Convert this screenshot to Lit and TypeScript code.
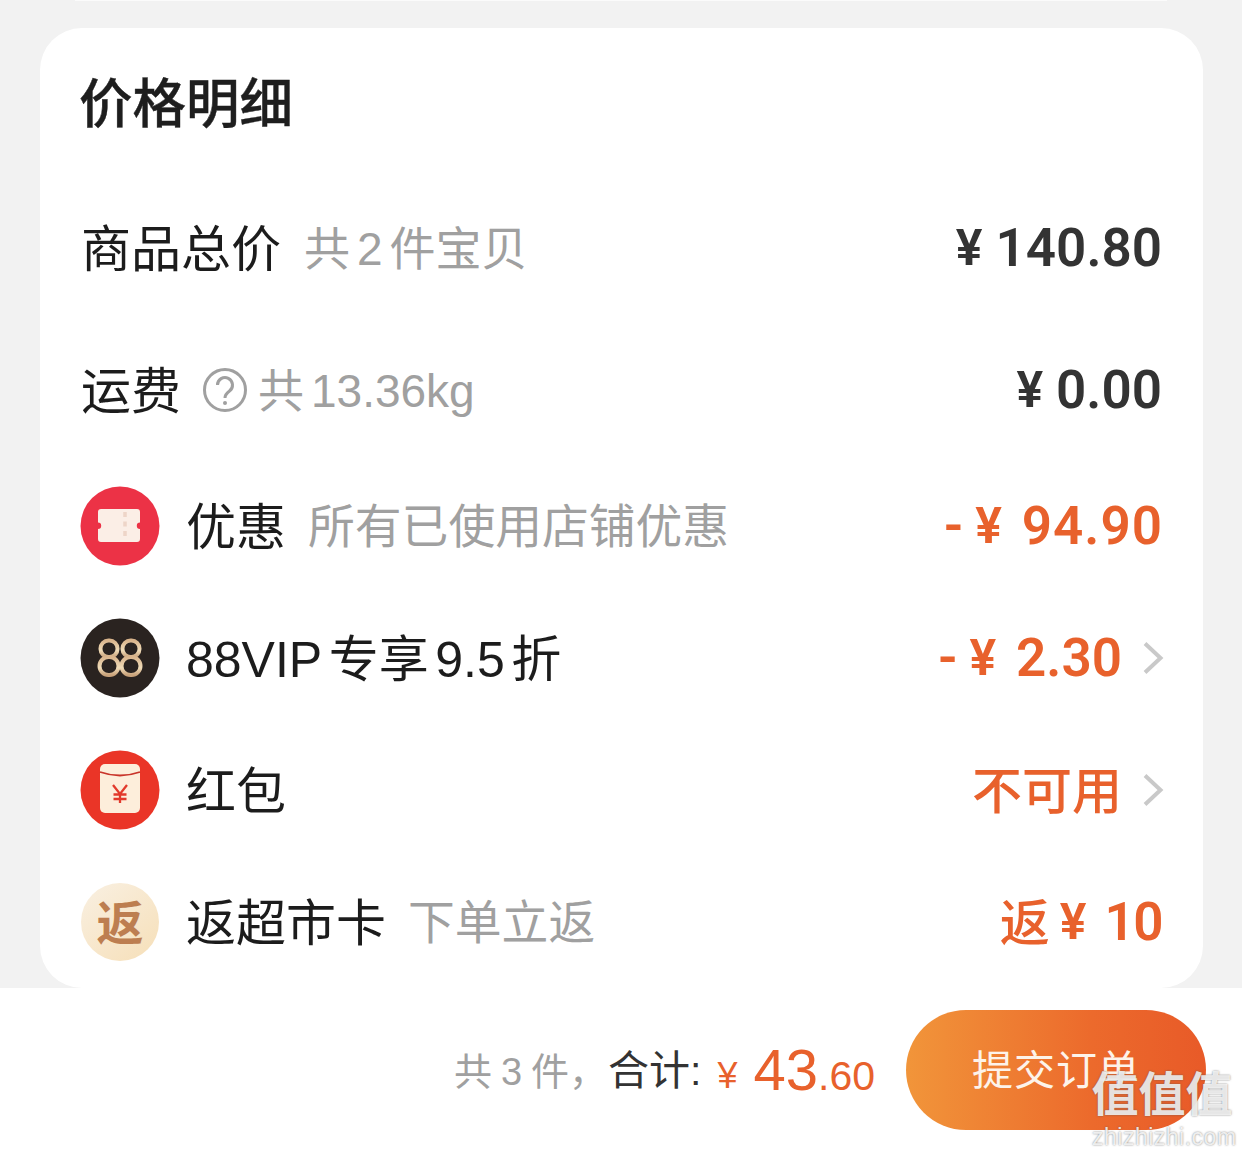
import { LitElement, html, css, svg } from "lit";
import { customElement } from "lit/decorators.js";

const chevron = html`<svg class="chev" viewBox="0 0 22 34"><path d="M3 2.500 L18.500 17 L3 31.500" fill="none" stroke="#c9c9c9" stroke-width="4"/></svg>`;

const ticket = html`<svg class="ic" viewBox="0 0 80 80">
  <circle cx="40" cy="40" r="39.500" fill="#ec3246"/>
  <path d="M21 23 H57 a3 3 0 0 1 3 3 V36.500 a3.200 3.200 0 0 0 0 6.400 V53 a3 3 0 0 1 -3 3 H21 a3 3 0 0 1 -3 -3 V42.900 a3.200 3.200 0 0 0 0 -6.400 V26 a3 3 0 0 1 3 -3 Z" fill="#fbeee6"/>
  <path d="M45 26 V54" stroke="#eed5c8" stroke-width="3.500" stroke-dasharray="5 4.500"/>
</svg>`;

const vip = html`<svg class="ic" viewBox="0 0 80 80">
  <defs><linearGradient id="g8" x1="0" y1="0" x2="0" y2="1"><stop offset="0" stop-color="#d9b48c"/><stop offset=".6" stop-color="#f0dcb8"/><stop offset="1" stop-color="#c9a27a"/></linearGradient></defs>
  <circle cx="40" cy="40" r="39.500" fill="#2a2320"/>
  ${[29, 51].map((x) => svg`<g fill="none" stroke="url(#g8)" stroke-width="4"><rect x="${x - 8.500}" y="22.500" width="17" height="16.500" rx="8"/><rect x="${x - 9.500}" y="39" width="19" height="18" rx="9"/></g>`)}
</svg>`;

const packet = html`<svg class="ic" viewBox="0 0 80 80">
  <circle cx="40" cy="40" r="39.500" fill="#ea3527"/>
  <rect x="20" y="14" width="40" height="49" rx="5" fill="#fdeedb"/>
  <path d="M20 22 Q40 29 60 22" fill="none" stroke="#c9342a" stroke-width="1.800"/>
  <path d="M33 35 L40 44 L47 35 M40 44 V53 M33.500 44.500 H46.500 M33.500 49 H46.500" fill="none" stroke="#e23a2c" stroke-width="2.300"/>
</svg>`;

@customElement("app-root")
export class AppRoot extends LitElement {
  static styles = css`
    :host {
      display: block;
      position: relative;
      width: 1242px;
      height: 1151px;
      overflow: hidden;
      background: #f2f2f2;
      font-family: "Liberation Sans", "Noto Sans CJK SC", sans-serif;
      color: #1c1c1c;
    }
    .line { height: 1px; margin: 0 75px; background: #fbfbfb; }
    .card {
      margin: 27px 39px 0 40px;
      height: 960px;
      box-sizing: border-box;
      padding: 0 41px;
      background: #fff;
      border-radius: 42px;
      overflow: hidden;
      display: flex;
      flex-direction: column;
    }
    .title { height: 148px; box-sizing: border-box; padding-bottom: 6px; margin-left: -2px; display: flex; align-items: center; font-size: 53.500px; font-weight: 500; color: #1e1e1e; -webkit-text-stroke: .4px #1e1e1e; }
    .row { display: flex; align-items: center; flex: none; height: 132px; font-size: 50px; }
    .row > span { margin-bottom: 7px; }
    .r1 { height: 144px; }
    .r2 { height: 140px; }
    .ic { width: 80px; height: 80px; margin: 0 26px 0 -1px; flex: none; }
    .sub { font-size: 46.800px; color: #a0a0a0; margin-left: 22px; }
    .sub.a { font-size: 46px; margin-left: 23px; }
    .gap { margin: 0 7px; }
    .help { width: 46px; height: 46px; margin-left: 21px; flex: none; }
    .row > .sub.w { margin-left: 10px; font-size: 46px; }
    .w .n { margin-left: 7px; }
    .label .g { margin: 0 6.500px; }
    .amt { margin-left: auto; display: flex; align-items: center; font-family: Roboto, "Noto Sans CJK SC", sans-serif; font-weight: 600; font-size: 53px; color: #333; }
    .amt.o { color: #e8612c; }
    .amt .y { font-size: 50px; margin-right: 13px; }
    .amt .d { margin-right: 12px; }
    .amt .z { margin-right: 20px; }
    .amt .wide { letter-spacing: 1px; margin-right: -1px; }
    .amt .tight { letter-spacing: -1.500px; }
    .amt .z.zt { margin-right: 18px; }
    .amt .cn { font-weight: 500; font-size: 50px; margin-bottom: 6px; }
    .amt .fan { font-weight: 500; font-size: 50px; margin-right: 10px; margin-bottom: 6px; }
    .chev { width: 22px; height: 34px; margin-left: 20px; margin-right: -2px; flex: none; }
    .row > .fan-ic {
      width: 78px; height: 78px; margin: 0 27px 0 0; flex: none; border-radius: 50%;
      background: linear-gradient(140deg, #f9f0e2, #f6dfb8);
      display: flex; align-items: center; justify-content: center;
    }
    .fan-ic b { font-size: 47px; font-weight: 700; color: #bd7e50; margin-bottom: 6px; }
    .footer {
      height: 163px;
      background: #fff;
      display: flex;
      align-items: center;
      justify-content: flex-end;
      padding-right: 36px;
    }
    .sum { display: block; white-space: nowrap; margin-right: 31px; font-size: 38px; color: #a0a0a0; }
    .sum .cj { vertical-align: 5px; }
    .sum .n { margin: 0 9px; }
    .sum .b { color: #333; margin-left: 1px; font-size: 41px; }
    .sum .oy { color: #e8612c; font-size: 36px; margin: 0 16px 0 16px; vertical-align: 2px; }
    .sum .big { color: #e8612c; font-size: 58px; }
    .sum .sm { color: #e8612c; font-size: 41px; }
    .btn {
      width: 300px; height: 120px; border-radius: 60px;
      margin-top: 1px;
      background: linear-gradient(90deg, #f1953a, #ec6a2c 62%, #e85a28);
      color: #fdf3ea;
      display: flex; align-items: center; justify-content: center;
      font-size: 41px; letter-spacing: 1px;
    }
    .btn span { margin-bottom: 7px; }
    .wm { position: absolute; left: 1089px; top: 1067px; width: 146px; color: rgba(255, 255, 255, .84); text-shadow: 0 0 2px rgba(90, 90, 90, .8); text-align: center; }
    .wm .t { font-size: 47px; line-height: 56px; font-weight: 700; white-space: nowrap; }
    .wm .u { font-size: 23px; line-height: 28px; letter-spacing: .5px; margin-left: 3px; }
  `;

  render() {
    return html`
      <div class="line"></div>
      <div class="card">
        <div class="title">价格明细</div>
        <div class="row r1">
          <span>商品总价</span>
          <span class="sub a">共<span class="gap">2</span>件宝贝</span>
          <div class="amt"><span class="y">¥</span>140.80</div>
        </div>
        <div class="row r2">
          <span>运费</span>
          <svg class="help" viewBox="0 0 46 46">
            <circle cx="23" cy="23" r="20.500" fill="none" stroke="#a0a0a0" stroke-width="3"/>
            <path d="M15.500 18 a7.500 7.500 0 1 1 12 6 c-3 2.200 -4.500 3.500 -4.500 7" fill="none" stroke="#a0a0a0" stroke-width="3"/>
            <circle cx="23" cy="36" r="2" fill="#a0a0a0"/>
          </svg>
          <span class="sub w">共<span class="n">13.36kg</span></span>
          <div class="amt"><span class="y">¥</span>0.00</div>
        </div>
        <div class="row">
          ${ticket}
          <span>优惠</span>
          <span class="sub">所有已使用店铺优惠</span>
          <div class="amt o"><span class="d">-</span><span class="y z">¥</span><span class="wide">94.90</span></div>
        </div>
        <div class="row">
          ${vip}
          <span class="label">88VIP<span class="g">专享</span>9.5<span class="g">折</span></span>
          <div class="amt o"><span class="d">-</span><span class="y z">¥</span>2.30</div>
          ${chevron}
        </div>
        <div class="row">
          ${packet}
          <span>红包</span>
          <div class="amt o"><span class="cn">不可用</span></div>
          ${chevron}
        </div>
        <div class="row">
          <div class="fan-ic"><b>返</b></div>
          <span>返超市卡</span>
          <span class="sub">下单立返</span>
          <div class="amt o"><span class="fan">返</span><span class="y z zt">¥</span><span class="tight">10</span></div>
        </div>
      </div>
      <div class="footer">
        <div class="sum"><span class="cj">共<span class="n">3</span>件，</span><span class="b cj">合计:</span><span class="oy">¥</span><span class="big">43</span><span class="sm">.60</span></div>
        <div class="btn"><span>提交订单</span></div>
      </div>
      <div class="wm">
        <div class="t">值值值</div>
        <div class="u">zhizhizhi.com</div>
      </div>
    `;
  }
}
